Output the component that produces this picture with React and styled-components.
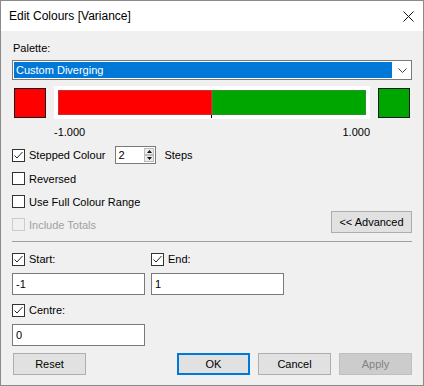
import React from 'react';
import styled, { createGlobalStyle } from 'styled-components';

const GlobalStyle = createGlobalStyle`
  html, body {
    margin: 0;
    padding: 0;
    background: #ffffff;
  }
  * {
    box-sizing: border-box;
  }
`;

const StyledWindow = styled.div`
  width: 424px;
  height: 386px;
  border: 1px solid #8a8a8a;
  background: #f0f0f0;
  font-family: 'Liberation Sans', Arial, sans-serif;
  font-size: 11px;
  color: #000;
  display: flex;
  flex-direction: column;
`;

const StyledTitleBar = styled.div`
  height: 30px;
  background: #ffffff;
  display: flex;
  align-items: center;
  justify-content: space-between;
  padding: 0 9px 0 8px;
  font-size: 12px;
`;

const StyledContent = styled.div`
  padding: 9px 11px 0 11px;
  display: flex;
  flex-direction: column;
`;

const StyledLabel = styled.div`
  line-height: 16px;
  padding-left: 1px;
  color: ${({ disabled }) => (disabled ? '#a0a0a0' : '#000')};
`;

const StyledSelect = styled.div`
  margin-top: 4px;
  height: 20px;
  border: 1px solid #7a7a7a;
  background: #ffffff;
  display: flex;
  align-items: center;
  padding: 1px;

  .selected {
    flex: 1;
    height: 16px;
    background: #0078d7;
    color: #ffffff;
    line-height: 16px;
    padding-left: 2px;
  }

  .chevron {
    width: 18px;
    display: flex;
    justify-content: center;
    padding-left: 2px;
  }
`;

const StyledSwatchRow = styled.div`
  margin-top: 6px;
  height: 33px;
  padding: 0 2px;
  display: flex;
  align-items: center;
  gap: 8px;
`;

const StyledSwatch = styled.div`
  width: 32px;
  height: 30px;
  border: 1px solid #1a1a1a;
  background: ${({ colour }) => colour};
`;

const StyledRamp = styled.div`
  width: 316px;
  height: 33px;
  background: #ffffff;
  padding: 4px;

  .bar {
    position: relative;
    height: 25px;
    display: flex;
    box-shadow: inset 0 0 0 1px rgba(120, 120, 120, 0.45);
  }

  .tick {
    position: absolute;
    left: 153px;
    bottom: -3px;
    width: 1px;
    height: 3px;
    background: #000;
  }
`;

const StyledStep = styled.div`
  flex: 1;
  background: ${({ colour }) => colour};
  box-shadow: inset 0 0 0 1px rgba(120, 120, 120, 0.4);
`;

const StyledScale = styled.div`
  margin: 5px 0 0 42px;
  width: 316px;
  line-height: 16px;
  display: flex;
  justify-content: space-between;
`;

const StyledOptionRow = styled.div`
  height: ${({ h }) => h || 23}px;
  margin-top: ${({ mt }) => mt || 0}px;
  display: flex;
  align-items: center;
  justify-content: space-between;
`;

const StyledCheckRow = styled.label`
  display: flex;
  align-items: center;
  gap: 4px;
  color: ${({ disabled }) => (disabled ? '#a0a0a0' : '#000')};
`;

const StyledBox = styled.span`
  width: 13px;
  height: 13px;
  border: 1px solid ${({ disabled }) => (disabled ? '#cccccc' : '#333333')};
  background: ${({ disabled }) => (disabled ? '#f0f0f0' : '#ffffff')};
  display: flex;
  align-items: center;
  justify-content: center;
`;

const StyledSpinner = styled.div`
  margin-left: 6px;
  width: 41px;
  height: 18px;
  border: 1px solid #7a7a7a;
  background: #ffffff;
  display: flex;

  .value {
    flex: 1;
    line-height: 16px;
    padding-left: 2px;
  }

  .buttons {
    width: 11px;
    display: flex;
    flex-direction: column;
    padding: 1px 1px 1px 0;
  }

  .btn {
    flex: 1;
    background: #ececec;
    border: 1px solid #bcbcbc;
    display: flex;
    align-items: center;
    justify-content: center;
  }
`;

const StyledSteps = styled.span`
  margin-left: 4px;
`;

const StyledButton = styled.button`
  width: ${({ w }) => w || 73}px;
  height: 22px;
  padding: 0;
  font-family: inherit;
  font-size: 11px;
  background: ${({ disabled }) => (disabled ? '#cccccc' : '#e1e1e1')};
  border: ${({ primary }) => (primary ? '2px solid #0078d7' : '1px solid #adadad')};
  color: ${({ disabled }) => (disabled ? '#838383' : '#000')};
  ${({ disabled }) => disabled && 'border-color: #bfbfbf;'}
`;

const StyledSeparator = styled.div`
  margin-top: 5px;
  height: 1px;
  background: #a0a0a0;
`;

const StyledRangeGrid = styled.div`
  margin-top: 5px;
  display: grid;
  grid-template-columns: 133px 133px;
  column-gap: 6px;
`;

const StyledField = styled.div`
  display: flex;
  flex-direction: column;
  gap: 2px;
  margin-bottom: 3px;
`;

const StyledInput = styled.div`
  height: 22px;
  border: 1px solid #7a7a7a;
  background: #ffffff;
  line-height: 20px;
  padding-left: 3px;
`;

const StyledFooter = styled.div`
  margin-top: 4px;
  padding-left: 1px;
  display: flex;
  gap: 8px;

  .spacer {
    flex: 1;
  }
`;

const Check = () => (
  <svg width="11" height="11" viewBox="0 0 11 11">
    <polyline points="1.5,5.5 4,8 9.5,2" fill="none" stroke="#222" strokeWidth="1" />
  </svg>
);

const CheckBox = ({ checked, disabled, children }) => (
  <StyledCheckRow disabled={disabled}>
    <StyledBox disabled={disabled}>{checked && <Check />}</StyledBox>
    {children}
  </StyledCheckRow>
);

const App = () => (
  <>
    <GlobalStyle />
    <StyledWindow>
      <StyledTitleBar>
        <span>Edit Colours [Variance]</span>
        <svg width="11" height="11" viewBox="0 0 11 11">
          <path d="M0.5 0.5 L10.5 10.5 M10.5 0.5 L0.5 10.5" stroke="#111" strokeWidth="1" />
        </svg>
      </StyledTitleBar>

      <StyledContent>
        <StyledLabel>Palette:</StyledLabel>
        <StyledSelect>
          <div className="selected">Custom Diverging</div>
          <div className="chevron">
            <svg width="9" height="5" viewBox="0 0 9 5">
              <polyline points="0.5,0.5 4.5,4.5 8.5,0.5" fill="none" stroke="#444" strokeWidth="1" />
            </svg>
          </div>
        </StyledSelect>

        <StyledSwatchRow>
          <StyledSwatch colour="#ff0000" />
          <StyledRamp>
            <div className="bar">
              <StyledStep colour="#ff0000" />
              <StyledStep colour="#00a600" />
              <div className="tick" />
            </div>
          </StyledRamp>
          <StyledSwatch colour="#00a600" />
        </StyledSwatchRow>

        <StyledScale>
          <span>-1.000</span>
          <span>1.000</span>
        </StyledScale>

        <StyledOptionRow mt={5} h={20}>
          <StyledCheckRow>
            <StyledBox>
              <Check />
            </StyledBox>
            Stepped Colour
            <StyledSpinner>
              <div className="value">2</div>
              <div className="buttons">
                <div className="btn">
                  <svg width="5" height="3" viewBox="0 0 5 3">
                    <polygon points="2.5,0 5,3 0,3" fill="#111" />
                  </svg>
                </div>
                <div className="btn">
                  <svg width="5" height="3" viewBox="0 0 5 3">
                    <polygon points="0,0 5,0 2.5,3" fill="#111" />
                  </svg>
                </div>
              </div>
            </StyledSpinner>
            <StyledSteps>Steps</StyledSteps>
          </StyledCheckRow>
        </StyledOptionRow>

        <StyledOptionRow mt={2}>
          <CheckBox>Reversed</CheckBox>
        </StyledOptionRow>
        <StyledOptionRow>
          <CheckBox>Use Full Colour Range</CheckBox>
        </StyledOptionRow>
        <StyledOptionRow>
          <CheckBox disabled>Include Totals</CheckBox>
          <StyledButton w={81} style={{ marginTop: -6 }}>
            &lt;&lt; Advanced
          </StyledButton>
        </StyledOptionRow>

        <StyledSeparator />

        <StyledRangeGrid>
          <StyledField>
            <StyledOptionRow h={24}>
              <CheckBox checked>Start:</CheckBox>
            </StyledOptionRow>
            <StyledInput>-1</StyledInput>
          </StyledField>
          <StyledField>
            <StyledOptionRow h={24}>
              <CheckBox checked>End:</CheckBox>
            </StyledOptionRow>
            <StyledInput>1</StyledInput>
          </StyledField>
          <StyledField>
            <StyledOptionRow h={24}>
              <CheckBox checked>Centre:</CheckBox>
            </StyledOptionRow>
            <StyledInput>0</StyledInput>
          </StyledField>
        </StyledRangeGrid>

        <StyledFooter>
          <StyledButton>Reset</StyledButton>
          <div className="spacer" />
          <StyledButton primary>OK</StyledButton>
          <StyledButton>Cancel</StyledButton>
          <StyledButton disabled>Apply</StyledButton>
        </StyledFooter>
      </StyledContent>
    </StyledWindow>
  </>
);

export default App;
